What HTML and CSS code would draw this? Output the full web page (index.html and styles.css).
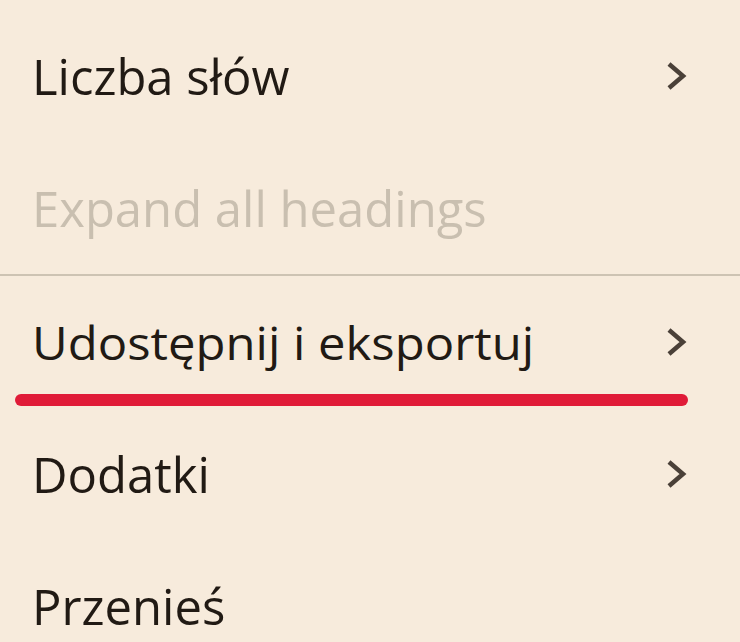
FILE: index.html
```html
<!DOCTYPE html>
<html lang="pl">
<head>
<meta charset="UTF-8">
<meta name="viewport" content="width=device-width, initial-scale=1.0"/>
<title>Menu</title>
<link rel="stylesheet" href="styles.css">
</head>
<body>
<ul class="menu">
    <li class="item">
        <span class="label">Liczba słów</span>
        <svg class="chev" viewBox="0 0 26 32"><path d="M5 4 L19 16 L5 28"/></svg>
    </li>
    <li class="item disabled">
        <span class="label">Expand all headings</span>
    </li>
    <li class="divider"></li>
    <li class="item marked">
        <span class="label squeeze">Udostępnij i eksportuj</span>
        <svg class="chev" viewBox="0 0 26 32"><path d="M5 4 L19 16 L5 28"/></svg>
        <span class="scribble"></span>
    </li>
    <li class="item">
        <span class="label">Dodatki</span>
        <svg class="chev" viewBox="0 0 26 32"><path d="M5 4 L19 16 L5 28"/></svg>
    </li>
    <li class="item">
        <span class="label">Przenieś</span>
    </li>
</ul>
</body>
</html>
```

FILE: styles.css
```css
* { margin:0; padding:0; box-sizing:border-box; }
body {
    background: #f7ebdc;
    font-family: 'Open Sans', sans-serif;
    color: #211a14;
    overflow: hidden;
    height: 100vh;
}
.menu {
    list-style: none;
    padding-top: 10px;
}
.item {
    height: 132px;
    display: flex;
    align-items: center;
    justify-content: space-between;
    padding: 0 50px 0 32px;
    position: relative;
}
.label {
    font-size: 49px;
    line-height: 1;
    white-space: nowrap;
}
.disabled .label { color: #c9bfb0; }
.squeeze {
    display: inline-block;
    transform: scaleY(0.94);
}
.chev {
    width: 26px;
    height: 32px;
    fill: none;
    stroke: #4a4038;
    stroke-width: 4.5;
}
.divider {
    height: 2px;
    background: #cdc3b3;
}
.scribble {
    position: absolute;
    left: 15px;
    top: 118px;
    width: 673px;
    height: 12px;
    border-radius: 6px;
    background: #e01b38;
}
```
